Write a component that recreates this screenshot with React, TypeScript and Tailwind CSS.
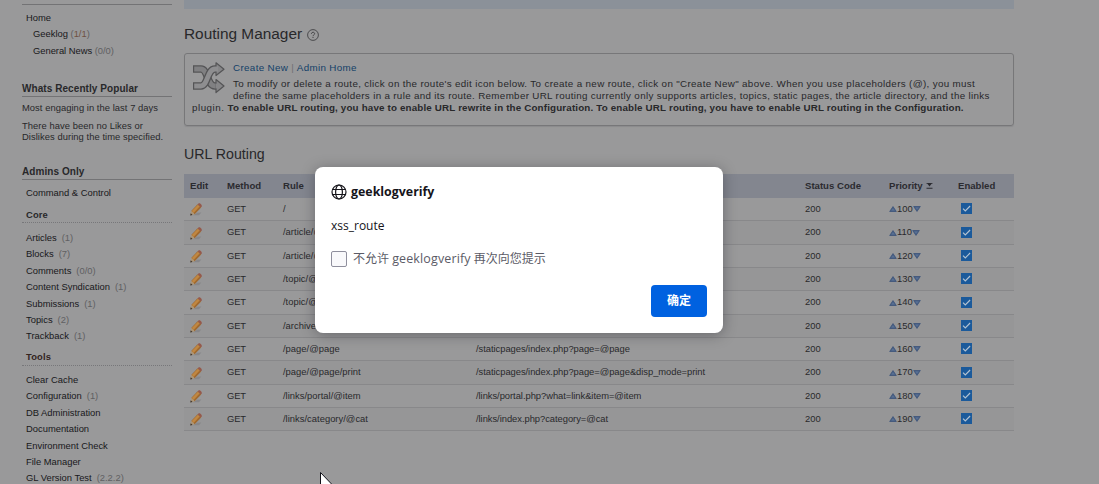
import React from "react";

type Item = { label: string; count?: string };

const core: Item[] = [
  { label: "Articles", count: "(1)" },
  { label: "Blocks", count: "(7)" },
  { label: "Comments", count: "(0/0)" },
  { label: "Content Syndication", count: "(1)" },
  { label: "Submissions", count: "(1)" },
  { label: "Topics", count: "(2)" },
  { label: "Trackback", count: "(1)" },
];

const tools: Item[] = [
  { label: "Clear Cache" },
  { label: "Configuration", count: "(1)" },
  { label: "DB Administration" },
  { label: "Documentation" },
  { label: "Environment Check" },
  { label: "File Manager" },
  { label: "GL Version Test", count: "(2.2.2)" },
];

const routes = [
  { rule: "/", route: "", priority: 100 },
  { rule: "/article/@", route: "", priority: 110 },
  { rule: "/article/@", route: "", priority: 120 },
  { rule: "/topic/@", route: "", priority: 130 },
  { rule: "/topic/@", route: "", priority: 140 },
  { rule: "/archive", route: "", priority: 150 },
  { rule: "/page/@page", route: "/staticpages/index.php?page=@page", priority: 160 },
  { rule: "/page/@page/print", route: "/staticpages/index.php?page=@page&disp_mode=print", priority: 170 },
  { rule: "/links/portal/@item", route: "/links/portal.php?what=link&item=@item", priority: 180 },
  { rule: "/links/category/@cat", route: "/links/index.php?category=@cat", priority: 190 },
];

const columns = "grid grid-cols-[37px_56px_193px_329px_84px_69px_1fr] items-center pl-[6px]";

function Pencil() {
  return (
    <svg width="13" height="13" viewBox="0 0 13 13" className="mt-px">
      <path d="M3 12.2h6l2.4-2.6-4 .2z" fill="#87878a" />
      <path d="M1.2 8 7.6 1.2l3.6 3.2-6.6 6.9z" fill="#a0692f" />
      <path d="M1.8 8 7.9 1.7l1.9 1.6-6.2 6.6z" fill="#c08742" />
      <path d="M7.6 1.2 8.8.2h1.1l1.8 1.8v1.2l-.9 1.2z" fill="#95594b" />
      <path d="M1.2 8 4.6 11.3.4 12.4z" fill="#ad9676" />
      <path d="M.2 12.6.8 10.2l1.7 1.8z" fill="#39312b" />
    </svg>
  );
}

function Arrow({ down = false }: { down?: boolean }) {
  return (
    <svg width="8" height="6" viewBox="0 0 8 6" className={down ? "mt-px rotate-180" : "mt-px"}>
      <path d="M4 .6 7.3 5.5H.7z" fill="#4c6488" stroke="#3b5279" strokeWidth=".8" />
      <path d="m4 2.4 1.1 1.8H2.9z" fill="#60779a" />
    </svg>
  );
}

function Check() {
  return (
    <svg width="11" height="11" viewBox="0 0 11 11" className="-mt-px">
      <path d="M0 0h11v11H0z" fill="#1b5a9b" />
      <path d="M2 5.6 4.3 8 9.1 3" fill="none" stroke="#b4c3d2" strokeWidth="1.1" />
    </svg>
  );
}

function Shuffle() {
  return (
    <svg width="33" height="32" viewBox="0 0 33 32" fill="none">
      <g strokeLinejoin="round">
        <path d="M1 7h8c7 0 6 17 14 17h2" stroke="#545456" strokeWidth="7.4" />
        <path d="M2.2 7H9c7 0 6 17 14 17h3" stroke="#808082" strokeWidth="4.8" />
        <path d="M24 17.5 32 24l-8 6.5z" fill="#868688" stroke="#545456" strokeWidth="1.2" />
        <path d="M1 24h8c7 0 6-17 14-17h2" stroke="#545456" strokeWidth="7.4" />
        <path d="M24 .8 32 7.2l-8 6.3z" fill="#868688" stroke="#545456" strokeWidth="1.2" />
        <path d="M2.2 24H9c7 0 6-17 14-17h3" stroke="#8e8e90" strokeWidth="4.8" />
        <path d="M23.5 24h3" stroke="#868688" strokeWidth="4.8" />
      </g>
    </svg>
  );
}

function Menu({ items }: { items: Item[] }) {
  return (
    <ul className="flex flex-col pl-1 text-[#18181a]">
      {items.map((item) => (
        <li key={item.label} className="h-[16.4px] whitespace-nowrap leading-[16.4px]">
          {item.label}
          {item.count && <span className="ml-[5px] text-[#606062]">{item.count}</span>}
        </li>
      ))}
    </ul>
  );
}

function Sidebar() {
  return (
    <aside className="flex w-[150px] shrink-0 flex-col text-[9.4px] text-[#28282a] *:shrink-0">
      <div className="h-[5px] border-b border-[#737375]" />
      <div className="mt-[5px] flex flex-col pl-1 leading-[16.4px] text-[#18181a]">
        <span>Home</span>
        <span className="pl-[7px]">Geeklog <span className="text-[#606062]">(<span className="text-[#6f5142]">1/1</span>)</span></span>
        <span className="pl-[7px] tracking-[-0.03px]">General News <span className="text-[#606062]">(0/0)</span></span>
      </div>
      <h3 className="mt-[22.8px] h-[15px] whitespace-nowrap border-b border-[#737375] text-[10px] font-bold leading-[13px] tracking-[0.07px]">Whats Recently Popular</h3>
      <p className="mt-[5px] whitespace-nowrap leading-[11px] tracking-[0.05px]">Most engaging in the last 7 days</p>
      <p className="mt-[7px] whitespace-nowrap leading-[11px] tracking-[0.06px]">There have been no Likes or<br />Dislikes during the time specified.</p>
      <h3 className="mt-[23px] h-[15px] border-b border-[#737375] text-[10px] font-bold leading-[13px] tracking-[0.07px]">Admins Only</h3>
      <span className="mt-[7px] pl-1 leading-[12px] text-[#18181a]">Command &amp; Control</span>
      <h4 className="mt-[10px] h-[14px] border-b border-dotted border-[#77777a] pl-1 font-bold leading-[12px] tracking-[0.15px]">Core</h4>
      <div className="mt-[7px]"><Menu items={core} /></div>
      <h4 className="mt-[6.2px] h-[15px] border-b border-dotted border-[#77777a] pl-1 font-bold leading-[12px] tracking-[0.15px] text-[#33241f]">Tools</h4>
      <div className="mt-[6px]"><Menu items={tools} /></div>
    </aside>
  );
}

function RouteTable() {
  return (
    <div className="mt-[10px] text-[9.4px] text-[#29292c]">
      <div className={`${columns} h-6 bg-[#83868f] text-[9.6px] font-bold text-[#2b2b30]`}>
        <span>Edit</span>
        <span>Method</span>
        <span>Rule</span>
        <span />
        <span>Status Code</span>
        <span className="flex items-center gap-[3px]">
          Priority
          <svg width="7" height="6" viewBox="0 0 7 6"><path d="M.5 0h6v.8H5.6L3.5 3.6 1.4.8H.5zM.5 4.8h6v1h-6z" fill="#2b2b30" /></svg>
        </span>
        <span>Enabled</span>
      </div>
      {routes.map((r, i) => (
        <div key={r.priority} className={`${columns} ${i % 3 === 1 ? "h-6" : "h-[23px]"} border-b border-[#88888a] ${i % 2 ? "bg-[#969697]" : "bg-[#99999a]"}`}>
          <Pencil />
          <span className="tracking-[-0.1px]">GET</span>
          <span className="whitespace-nowrap tracking-[0.02px]">{r.rule}</span>
          <span className="whitespace-nowrap tracking-[-0.04px]">{r.route}</span>
          <span>200</span>
          <span className="flex items-center"><Arrow />{r.priority}<Arrow down /></span>
          <span className="pl-[3px]"><Check /></span>
        </div>
      ))}
    </div>
  );
}

function Dialog() {
  return (
    <div className="absolute left-[315px] top-[167px] flex h-[166px] w-[408px] flex-col rounded-lg bg-white px-4 text-[#15141a] shadow-[0_2px_14px_rgba(20,20,30,0.35)] [font-family:'Open_Sans','Noto_Sans_CJK_SC',sans-serif]">
      <div className="mt-[17px] flex h-4 items-center gap-[4px] text-[12.4px] font-bold">
        <svg width="16" height="16" viewBox="0 0 16 16" fill="none" stroke="#15141a" strokeWidth="1.2">
          <circle cx="8" cy="8" r="7" />
          <ellipse cx="8" cy="8" rx="3.4" ry="7" />
          <path d="M1.5 5.5h13M1.5 10.5h13" />
        </svg>
        <span>geeklogverify</span>
      </div>
      <p className="mt-[18px] h-4 text-[12px] leading-4">xss_route</p>
      <label className="mt-[17px] flex h-4 items-center gap-[6px] whitespace-nowrap text-[12px] text-[#5b5b66]">
        <span className="h-4 w-4 rounded-[2px] border border-[#8f8f9d] bg-[#f9f9fb]" />
        <span>不允许 <span className="text-[12.5px] tracking-[0.13px]">geeklogverify</span> 再次向您提示</span>
      </label>
      <button className="mt-[18px] h-8 w-14 self-end rounded bg-[#0061e0] text-[12px] font-bold text-white">确定</button>
    </div>
  );
}

export default function App() {
  return (
    <div className="relative flex h-[484px] w-[1099px] overflow-hidden bg-[#99999a] pl-[22px] [font-family:'Liberation_Sans',Arial,sans-serif]">
      <Sidebar />
      <main className="ml-3 flex w-[830px] flex-col">
        <div className="h-[9px] bg-[#8b9199]" />
        <h1 className="mt-[15px] flex h-5 items-center gap-[5px] text-[15.4px] text-[#28282a]">
          Routing Manager
          <svg width="12" height="12" viewBox="0 0 12 12" fill="none" stroke="#434345" className="mt-px">
            <circle cx="6" cy="6" r="5.4" strokeWidth=".9" />
            <path d="M4.4 4.8c0-2.1 3.2-2 3.2-.1 0 1.2-1.6 1.2-1.6 2.5M6 8v1" />
          </svg>
        </h1>
        <section className="mt-[9px] flex h-[73px] flex-col rounded-[3px] border border-[#777779] pl-[7px] text-[9.8px] text-[#28282a] shadow-[0_1px_1px_#8b8b8d]">
          <div className="flex gap-[8px]">
            <div className="mt-[8px] h-8 w-[33px] shrink-0"><Shuffle /></div>
            <div className="whitespace-nowrap">
              <p className="mt-[8px] h-4 leading-[12px] tracking-[0.35px] text-[#133f68]">Create New <span className="text-[#707072]">|</span> Admin Home</p>
              <p className="leading-[12px] tracking-[0.34px]">To modify or delete a route, click on the route's edit icon below. To create a new route, click on "Create New" above. When you use placeholders (@), you must</p>
              <p className="leading-[12px] tracking-[0.325px]">define the same placeholders in a rule and its route. Remember URL routing currently only supports articles, topics, static pages, the article directory, and the links</p>
            </div>
          </div>
          <p className="whitespace-nowrap leading-[12px] tracking-[0.16px]"><span className="tracking-[0.5px]">plugin. </span><b>To enable URL routing, you have to enable URL rewrite in the Configuration. To enable URL routing, you have to enable URL routing in the Configuration.</b></p>
        </section>
        <h2 className="mt-[19px] h-[19px] text-[14.2px] leading-[19px] text-[#28282a]">URL Routing</h2>
        <RouteTable />
      </main>
      <Dialog />
      <svg width="13" height="20" viewBox="0 0 13 20" className="absolute left-[320px] top-[472px]">
        <path d="M.5.5v17l4-4 3 6 2-1-3-6h5.5z" fill="#fff" stroke="#111118" />
      </svg>
    </div>
  );
}
